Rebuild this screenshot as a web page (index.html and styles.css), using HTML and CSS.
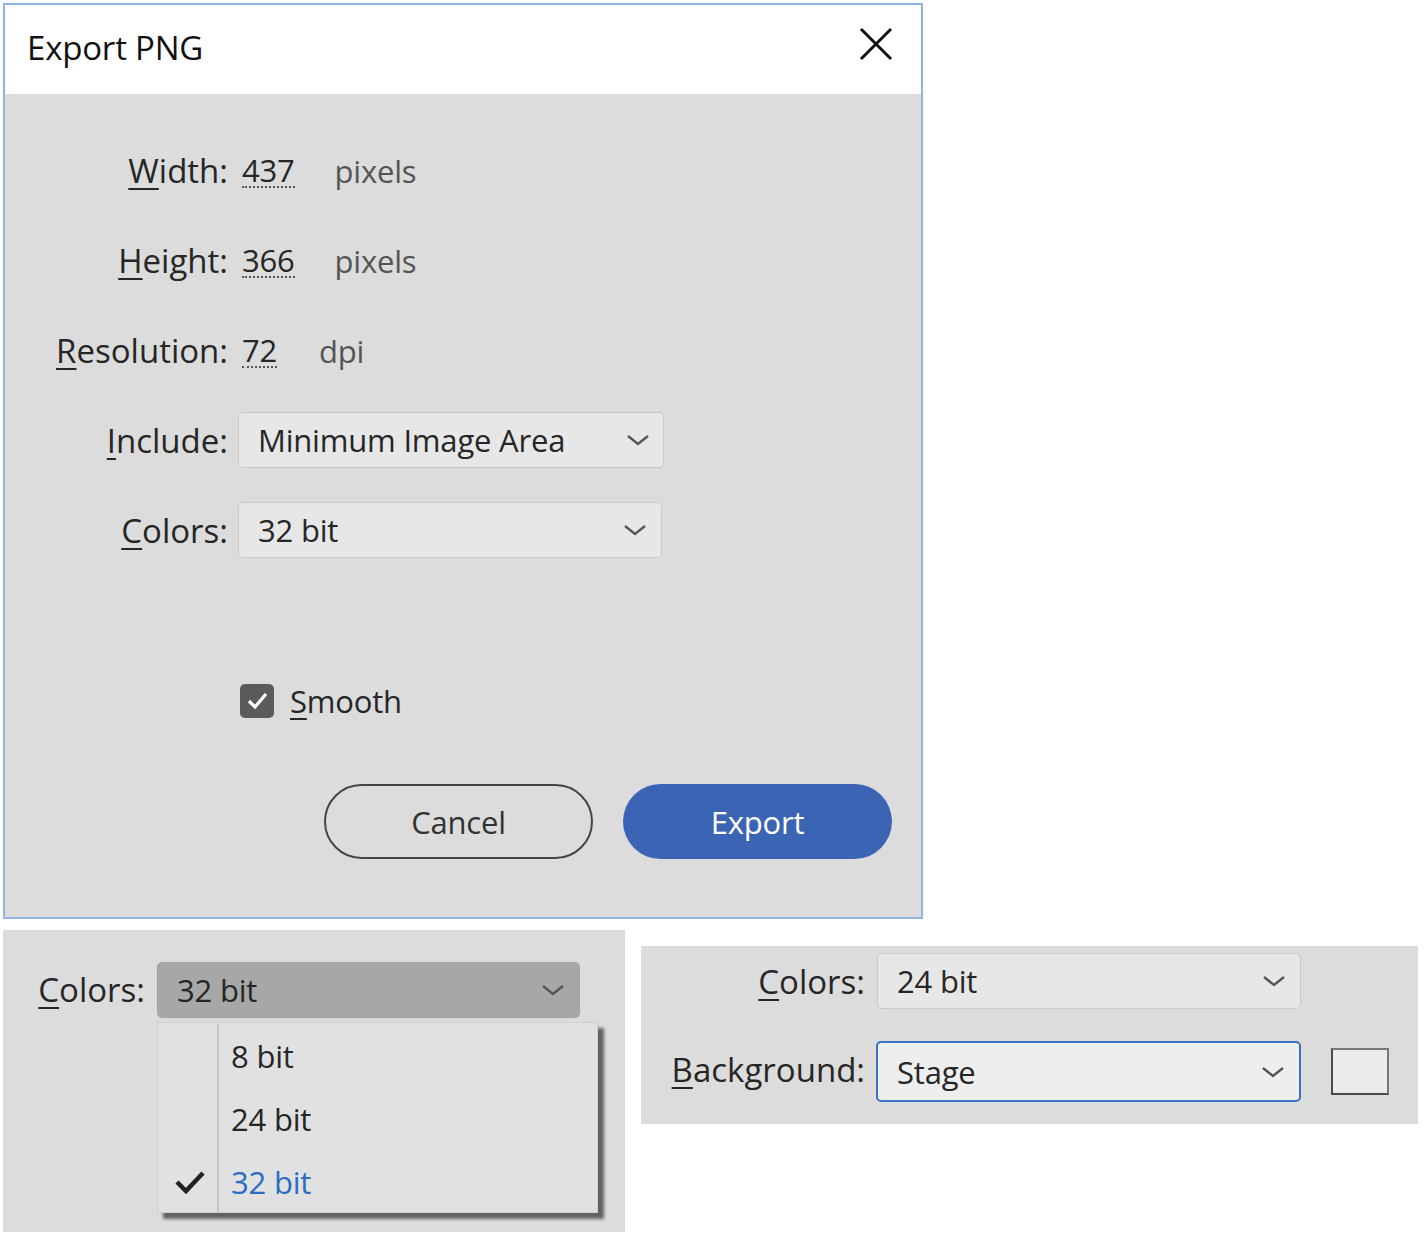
FILE: index.html
```html
<!DOCTYPE html>
<html lang="en">
<head>
    <meta charset="UTF-8">
    <title>Export PNG</title>
    <link rel="stylesheet" href="styles.css">
</head>
<body>
    <div class="page">
        <div class="dialog">
            <div class="titlebar">
                <span class="title">Export PNG</span>
                <svg class="close" width="34" height="34" viewBox="0 0 34 34">
                    <path d="M2 2 L32 32 M32 2 L2 32" stroke="#111" stroke-width="3" fill="none"/>
                </svg>
            </div>
            <div class="dialog-body">
                <div class="form">
                    <label class="label"><u>W</u>idth:</label>
                    <div class="value"><span class="num">437</span><span class="unit">pixels</span></div>

                    <label class="label"><u>H</u>eight:</label>
                    <div class="value"><span class="num">366</span><span class="unit">pixels</span></div>

                    <label class="label"><u>R</u>esolution:</label>
                    <div class="value"><span class="num">72</span><span class="unit short">dpi</span></div>

                    <label class="label"><u>I</u>nclude:</label>
                    <div class="select wide">
                        <span>Minimum Image Area</span>
                        <svg class="chev" width="24" height="12" viewBox="0 0 24 12"><path d="M2 2 L12 10 L22 2" stroke="#555" stroke-width="2.4" fill="none"/></svg>
                    </div>

                    <label class="label"><u>C</u>olors:</label>
                    <div class="select">
                        <span>32 bit</span>
                        <svg class="chev" width="24" height="12" viewBox="0 0 24 12"><path d="M2 2 L12 10 L22 2" stroke="#555" stroke-width="2.4" fill="none"/></svg>
                    </div>

                    <div class="checkrow">
                        <span class="checkbox">
                            <svg width="34" height="34" viewBox="0 0 34 34"><path d="M9 17 L15 23 L26 10" stroke="#fff" stroke-width="3.2" fill="none"/></svg>
                        </span>
                        <span><u>S</u>mooth</span>
                    </div>
                </div>
                <div class="buttons">
                    <button class="btn cancel">Cancel</button>
                    <button class="btn export">Export</button>
                </div>
            </div>
        </div>

        <div class="bottom">
            <div class="panel left-panel">
                <label class="label small-col"><u>C</u>olors:</label>
                <div class="combo">
                    <div class="select pressed">
                        <span>32 bit</span>
                        <svg class="chev" width="24" height="12" viewBox="0 0 24 12"><path d="M2 2 L12 10 L22 2" stroke="#555" stroke-width="2.4" fill="none"/></svg>
                    </div>
                    <ul class="menu">
                        <li><span class="mark"></span><span>8 bit</span></li>
                        <li><span class="mark"></span><span>24 bit</span></li>
                        <li class="checked">
                            <span class="mark"><svg width="32" height="26" viewBox="0 0 32 26"><path d="M3 13 L12 22 L29 4" stroke="#222" stroke-width="4.5" fill="none"/></svg></span>
                            <span>32 bit</span>
                        </li>
                    </ul>
                </div>
            </div>

            <div class="panel right-panel">
                <div class="form compact">
                    <label class="label"><u>C</u>olors:</label>
                    <div class="select">
                        <span>24 bit</span>
                        <svg class="chev" width="24" height="12" viewBox="0 0 24 12"><path d="M2 2 L12 10 L22 2" stroke="#555" stroke-width="2.4" fill="none"/></svg>
                    </div>

                    <label class="label"><u>B</u>ackground:</label>
                    <div class="bg-row">
                        <div class="select focused">
                            <span>Stage</span>
                            <svg class="chev" width="24" height="12" viewBox="0 0 24 12"><path d="M2 2 L12 10 L22 2" stroke="#555" stroke-width="2.4" fill="none"/></svg>
                        </div>
                        <span class="swatch"></span>
                    </div>
                </div>
            </div>
        </div>
    </div>
</body>
</html>
```

FILE: styles.css
```css
body {
    margin: 0;
    background: #ffffff;
    font-family: "Open Sans", "Noto Sans", sans-serif;
    color: #262626;
}
u {
    text-decoration-thickness: 2px;
    text-underline-offset: 5px;
}
.page {
    padding: 3px;
}
.dialog {
    width: 916px;
    height: 912px;
    border: 2px solid #8db4e2;
    background: #dcdcdc;
    display: flex;
    flex-direction: column;
}
.titlebar {
    height: 89px;
    background: #ffffff;
    display: flex;
    align-items: center;
    justify-content: space-between;
    padding: 0 28px 0 22px;
}
.title {
    font-size: 33px;
    color: #111;
    letter-spacing: -0.2px;
    margin-top: -4px;
}
.close {
    margin-top: -12px;
}
.dialog-body {
    flex: 1;
    display: flex;
    flex-direction: column;
    padding-top: 48px;
}
.form {
    display: grid;
    grid-template-columns: 223px 430px;
    column-gap: 10px;
    row-gap: 32px;
    font-size: 31px;
    letter-spacing: -0.2px;
}
.label {
    text-align: right;
    height: 58px;
    line-height: 58px;
    white-space: nowrap;
    font-size: 33px;
    letter-spacing: 0;
}
.value {
    display: flex;
    align-items: center;
    height: 58px;
    padding-left: 4px;
}
.num {
    line-height: 32px;
    border-bottom: 2px dotted #555;
}
.unit {
    color: #555;
    margin-left: 40px;
}
.unit.short {
    margin-left: 42px;
}
.select {
    height: 56px;
    box-sizing: border-box;
    width: 424px;
    border: 1px solid #c9c9c9;
    border-radius: 5px;
    background: #e7e7e7;
    display: flex;
    align-items: center;
    justify-content: space-between;
    padding: 0 14px 0 19px;
}
.select.wide {
    width: 426px;
    padding-right: 13px;
}
.checkrow {
    grid-column: 2;
    margin-top: 88px;
    display: flex;
    align-items: center;
    gap: 16px;
    padding-left: 2px;
}
.checkbox {
    width: 34px;
    height: 34px;
    border-radius: 5px;
    background: #5b5b5b;
    display: flex;
}
.buttons {
    display: flex;
    justify-content: flex-end;
    gap: 30px;
    padding-right: 29px;
    margin-top: 62px;
}
.btn {
    width: 269px;
    height: 75px;
    border-radius: 38px;
    font-family: inherit;
    font-size: 31px;
    letter-spacing: -0.2px;
}
.cancel {
    border: 2px solid #444;
    background: transparent;
    color: #333;
}
.export {
    border: none;
    background: #3c64b4;
    color: #ffffff;
}
.bottom {
    display: flex;
    align-items: flex-start;
    gap: 16px;
    margin-top: 11px;
}
.panel {
    background: #dcdcdc;
    font-size: 31px;
    letter-spacing: -0.2px;
}
.left-panel {
    width: 622px;
    height: 302px;
    box-sizing: border-box;
    padding: 32px 0 0 0;
    display: flex;
    column-gap: 12px;
}
.small-col {
    width: 142px;
    height: 56px;
    line-height: 56px;
}
.combo {
    position: relative;
}
.select.pressed {
    width: 423px;
    background: #a7a7a7;
    border-color: #a2a2a2;
}
.menu {
    position: absolute;
    left: 0;
    top: 60px;
    width: 441px;
    height: 191px;
    box-sizing: border-box;
    margin: 0;
    padding: 1px 0;
    list-style: none;
    background: #e1e1e1;
    border: 1px solid #cfcfcf;
    box-shadow: 6px 6px 3px rgba(0, 0, 0, 0.55);
}
.menu li {
    height: 63px;
    display: flex;
    align-items: center;
}
.menu .mark {
    width: 61px;
    height: 100%;
    border-right: 2px solid #c6c6c6;
    margin-right: 12px;
    display: flex;
    align-items: center;
    justify-content: center;
    box-sizing: border-box;
    padding-left: 4px;
}
.menu li.checked span:last-child {
    color: #2b6cc4;
}
.right-panel {
    width: 777px;
    height: 178px;
    box-sizing: border-box;
    margin-top: 16px;
    padding-top: 7px;
}
.form.compact {
    grid-template-columns: 224px auto;
    column-gap: 12px;
    row-gap: 31px;
}
.form.compact .label {
    height: 57px;
    line-height: 57px;
}
.bg-row {
    display: flex;
    align-items: center;
    gap: 30px;
}
.select.focused {
    height: 61px;
    width: 425px;
    border: 2px solid #3a72c4;
    background: #eeeeee;
    margin-left: -1px;
}
.swatch {
    width: 58px;
    height: 47px;
    box-sizing: border-box;
    border: 2px solid #4a4a4a;
    border-top-color: #777;
    border-right-color: #777;
    background: #ebebeb;
}
```
